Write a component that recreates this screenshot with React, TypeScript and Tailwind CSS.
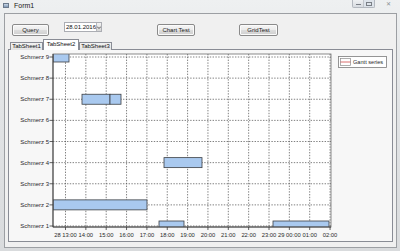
import React from "react";

interface Bar {
  x1: number;
  x2: number;
  v: number;
}

const hours = [
  "28 13:00",
  "14:00",
  "15:00",
  "16:00",
  "17:00",
  "18:00",
  "19:00",
  "20:00",
  "21:00",
  "22:00",
  "23:00",
  "29 00:00",
  "01:00",
  "02:00",
];

const bars: Bar[] = [
  { x1: 53, x2: 69, v: 9 },
  { x1: 82, x2: 110, v: 7 },
  { x1: 110, x2: 121, v: 7 },
  { x1: 164, x2: 202, v: 4 },
  { x1: 53, x2: 147, v: 2 },
  { x1: 159, x2: 184, v: 1 },
  { x1: 273, x2: 329, v: 1 },
];

// page coordinates, the svg viewBox is offset so these match the screenshot
const rowY = (v: number) => 227 - (v - 1) * 21.125;
const hourX = (h: number) => 65.5 + h * 20.35;

const WinButton = ({ label, w }: { label: string; w: string }) => (
  <button
    className={`${w} h-[12px] rounded-[2px] border border-[#8a8a8a] bg-[linear-gradient(#f6f6f6,#ebebeb_50%,#dddddd_50%,#cfcfcf)] text-[6px] leading-none text-[#222] shadow-[inset_0_0_0_1px_#fbfbfb]`}
  >
    {label}
  </button>
);

const GanttChart = () => {
  return (
    <svg
      width={383}
      height={191}
      viewBox="9 51 383 191"
      className="block"
      style={{ fontFamily: '"Liberation Sans", Arial, sans-serif' }}
    >
      <defs>
        <clipPath id="plot">
          <rect x={53} y={55} width={278} height={173} />
        </clipPath>
      </defs>
      <rect x={9} y={51} width={383} height={191} fill="#f7f7f7" />
      <rect x={53} y={55} width={278} height={173} fill="#ffffff" />

      {/* grid */}
      {[1, 2, 3, 4, 5, 6, 7, 8, 9].map((v) => (
        <line
          key={`h${v}`}
          x1={53}
          x2={331}
          y1={rowY(v)}
          y2={rowY(v)}
          stroke="#4a4a4a"
          strokeWidth={0.7}
          strokeDasharray="1.4 1.4"
        />
      ))}
      {hours.map((_, i) => (
        <line
          key={`v${i}`}
          x1={hourX(i)}
          x2={hourX(i)}
          y1={55}
          y2={228}
          stroke="#4a4a4a"
          strokeWidth={0.7}
          strokeDasharray="1.4 1.4"
        />
      ))}

      {/* bars */}
      <g clipPath="url(#plot)">
        {bars.map((b, i) => (
          <rect
            key={i}
            x={b.x1}
            y={rowY(b.v) - 5}
            width={b.x2 - b.x1}
            height={10}
            fill="#a9c9ef"
            stroke="#3c3f44"
            strokeWidth={0.8}
          />
        ))}
      </g>

      {/* axes */}
      <rect
        x={53}
        y={55}
        width={278}
        height={173}
        fill="none"
        stroke="#6e6e6e"
        strokeWidth={0.8}
      />
      <line x1={53} x2={53} y1={55} y2={228} stroke="#3a3a3a" strokeWidth={0.9} />
      <line x1={53} x2={331} y1={228} y2={228} stroke="#3a3a3a" strokeWidth={0.9} />

      {[1, 2, 3, 4, 5, 6, 7, 8, 9].map((v) => (
        <g key={`l${v}`}>
          <line x1={49.5} x2={53} y1={rowY(v)} y2={rowY(v)} stroke="#3a3a3a" strokeWidth={0.8} />
          <text x={49} y={rowY(v) + 2} fontSize={6} textAnchor="end" fill="#2a2a2a">
            Schmerz {v}
          </text>
        </g>
      ))}
      {hours.map((h, i) => (
        <g key={`x${i}`}>
          <line x1={hourX(i)} x2={hourX(i)} y1={228} y2={231} stroke="#3a3a3a" strokeWidth={0.8} />
          <text x={hourX(i)} y={237.5} fontSize={5.8} textAnchor="middle" fill="#2a2a2a">
            {h}
          </text>
        </g>
      ))}

      {/* legend */}
      <rect x={338.5} y={57.5} width={48} height={11} fill="#ffffff" stroke="#7c7c7c" strokeWidth={0.8} />
      <rect x={340.5} y={59.5} width={10} height={7} fill="#ffffff" stroke="#8c8c8c" strokeWidth={0.7} />
      <line x1={340.5} x2={350.5} y1={63} y2={63} stroke="#d24a4a" strokeWidth={0.8} />
      <text x={353} y={65.2} fontSize={5.6} fill="#2a2a2a">
        Gantt series
      </text>
    </svg>
  );
};

export default function App() {
  return (
    <div
      className="w-[400px] h-[251px] overflow-hidden bg-[linear-gradient(180deg,#eef0f1,#e2e4e6_40%,#d9dbdd)] text-[#111]"
      style={{ fontFamily: '"Liberation Sans", Arial, sans-serif' }}
    >
      {/* title bar */}
      <div className="h-[13px] flex items-start">
        <div className="ml-[3px] mt-[3px] w-[6px] h-[5px] border border-[#6b7a8c] bg-[linear-gradient(#c8d6e6,#7f98b5)]" />
        <span className="ml-[5px] mt-[2px] text-[7px] leading-[8px] text-[#1a1a1a]">Form1</span>
        <div className="ml-auto mr-[3px] flex items-start">
          <div className="flex h-[8px] rounded-b-[2px] border border-t-0 border-[#b3b8bf] bg-[linear-gradient(#eef0f2,#d8dce1)]">
            <div className="w-[10px] flex items-center justify-center">
              <div className="w-[5px] h-[1.5px] bg-[#7a7f86] mt-[2px]" />
            </div>
            <div className="w-[11px] flex items-center justify-center border-l border-[#c2c6cc] bg-[#dde3ea]">
              <div className="w-[6px] h-[4px] border border-[#7a7f86]" />
            </div>
          </div>
          <div className="ml-[5px] w-[17px] h-[8px] flex items-center justify-center text-[6px] leading-none text-[#8a8f96]">
            ✕
          </div>
        </div>
      </div>

      {/* client area */}
      <div className="ml-[4px] w-[393px] h-[235px] border border-[#9c9fa3] bg-[#f0f0f0]">
        <div className="mt-[7px] h-[12px] flex items-center">
          <div className="ml-[7px]">
            <WinButton label="Query" w="w-[37px]" />
          </div>
          <div className="ml-[15px] w-[38px] h-[10px] flex border border-[#abadb3] bg-white">
            <span className="flex-1 pl-[1px] text-[6px] leading-[8px] text-[#111]">28.01.2016</span>
            <div className="w-[6px] h-[8px] border-l border-[#b8b8b8] bg-[linear-gradient(#f4f4f4,#d6d6d6)] flex items-center justify-center">
              <svg width="4" height="3" viewBox="0 0 4 3">
                <path d="M0 0.5 L2 2.5 L4 0.5" fill="none" stroke="#333" strokeWidth="0.8" />
              </svg>
            </div>
          </div>
          <div className="ml-[55px]">
            <WinButton label="Chart Test" w="w-[38px]" />
          </div>
          <div className="ml-[44px]">
            <WinButton label="GridTest" w="w-[39px]" />
          </div>
        </div>

        {/* tabs */}
        <div className="mt-[6px] ml-[5px] h-[11px] flex items-end relative z-10 -mb-px">
          <div className="w-[33px] h-[8px] border border-b-0 border-[#898c95] bg-[linear-gradient(#f2f2f2,#e3e3e3)] text-[6px] leading-[7px] text-center text-[#111]">
            TabSheet1
          </div>
          <div className="w-[36px] h-[11px] border border-b-0 border-[#898c95] bg-white text-[6px] leading-[9px] text-center text-[#111]">
            TabSheet2
          </div>
          <div className="w-[33px] h-[8px] border border-b-0 border-[#898c95] bg-[linear-gradient(#f2f2f2,#e3e3e3)] text-[6px] leading-[7px] text-center text-[#111]">
            TabSheet3
          </div>
        </div>
        <div className="ml-[3px] w-[385px] h-[193px] border border-[#898c95] bg-white">
          <GanttChart />
        </div>
      </div>
    </div>
  );
}
